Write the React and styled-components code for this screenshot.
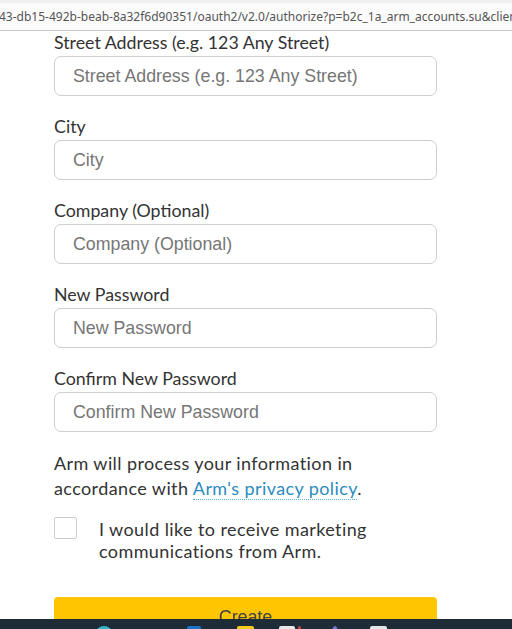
import React from "react";
import styled, { createGlobalStyle } from "styled-components";

const Global = createGlobalStyle`
  html, body { margin: 0; padding: 0; background: #fff; }
  body { width: 512px; height: 629px; overflow: hidden; }
  * { box-sizing: border-box; }
`;

const Page = styled.div`
  width: 512px;
  height: 629px;
  overflow: hidden;
  background: #fff;
  position: relative;
`;

const AddressBar = styled.div`
  height: 31px;
  background: #fbfbfb;
  border-top: 3px solid #efefef;
  border-bottom: 1px solid #c9c9c9;
  display: flex;
  align-items: center;
  font-family: "Noto Sans", "Open Sans", sans-serif;
  font-size: 12px;
  color: #555;
  white-space: nowrap;
  overflow: hidden;
`;

const Url = styled.span`
  display: block;
  margin-left: -1px;
  margin-top: -1px;
`;

const Form = styled.form`
  width: 383px;
  margin-left: 54px;
  display: flex;
  flex-direction: column;
  font-family: Lato, "Open Sans", sans-serif;
  color: #333;
`;

const Field = styled.div`
  display: flex;
  flex-direction: column;
  margin-bottom: 19px;
`;

const Label = styled.label`
  font-size: 17.8px;
  line-height: 22px;
  margin-bottom: 3px;
  color: #333;
`;

const Input = styled.input`
  height: 40px;
  width: 100%;
  border: 1px solid #cfcfcf;
  border-radius: 7px;
  padding: 0 0 0 18px;
  font-family: "Liberation Sans", Arial, sans-serif;
  font-size: 17.8px;
  color: #333;
  background: #fff;
  outline: none;
  &::placeholder { color: #767676; }
`;

const Notice = styled.p`
  margin: 0 0 18px 0;
  font-size: 18px;
  line-height: 25px;
  letter-spacing: 0.4px;
  color: #333;
`;

const Link = styled.a`
  color: #2c8bbd;
  text-decoration: none;
  border-bottom: 1px dotted #5aaed6;
`;

const CheckRow = styled.div`
  display: flex;
  align-items: flex-start;
  gap: 22px;
`;

const Box = styled.span`
  flex: none;
  width: 23px;
  height: 22px;
  margin-top: -2px;
  border: 1.5px solid #cdcdcd;
  border-radius: 2px;
  background: #fff;
`;

const CheckText = styled.span`
  font-size: 18px;
  line-height: 21.5px;
  letter-spacing: 0.4px;
  color: #333;
`;

const Button = styled.button`
  margin-top: 35px;
  height: 40px;
  width: 100%;
  border: none;
  border-radius: 4px;
  background: #ffc600;
  font-family: "Liberation Sans", Arial, sans-serif;
  font-size: 17.8px;
  color: #444;
  padding: 0;
`;

const Taskbar = styled.div`
  position: fixed;
  left: 0;
  right: 0;
  bottom: 0;
  height: 10px;
  background: #1e2c38;
  display: flex;
  align-items: flex-start;
  overflow: hidden;
`;

const TaskIcon = styled.span`
  flex: none;
  margin-left: ${(p) => p.$ml}px;
  margin-top: 7px;
  width: ${(p) => p.$w}px;
  height: 14px;
  background: ${(p) => p.$c};
  border-radius: ${(p) => (p.$round ? "50%" : "2px")};
`;

const fields = [
  "Street Address (e.g. 123 Any Street)",
  "City",
  "Company (Optional)",
  "New Password",
  "Confirm New Password",
];

export default function App() {
  return (
    <Page>
      <Global />
      <AddressBar>
        <Url>43-db15-492b-beab-8a32f6d90351/oauth2/v2.0/authorize?p=b2c_1a_arm_accounts.su&amp;client_id=</Url>
      </AddressBar>
      <Form onSubmit={(e) => e.preventDefault()}>
        {fields.map((f) => (
          <Field key={f}>
            <Label>{f}</Label>
            <Input
              placeholder={f}
              type={f.includes("Password") ? "password" : "text"}
            />
          </Field>
        ))}
        <Notice>
          Arm will process your information in accordance with{" "}
          <Link href="#">Arm's privacy policy</Link>.
        </Notice>
        <CheckRow>
          <Box />
          <CheckText>
            I would like to receive marketing
            <br />
            communications from Arm.
          </CheckText>
        </CheckRow>
        <Button type="submit">Create</Button>
      </Form>
      <Taskbar>
        <TaskIcon $ml={96} $w={16} $c="#2fb6c9" $round />
        <TaskIcon $ml={75} $w={14} $c="#1a73c8" />
        <TaskIcon $ml={36} $w={17} $c="#f5cc1c" />
        <TaskIcon $ml={25} $w={16} $c="#e8e8e8" />
        <TaskIcon $ml={3} $w={3} $c="#d04040" />
        <TaskIcon $ml={31} $w={6} $c="#7b6fd6" $round />
        <TaskIcon $ml={32} $w={17} $c="#e6e6e6" />
      </Taskbar>
    </Page>
  );
}
